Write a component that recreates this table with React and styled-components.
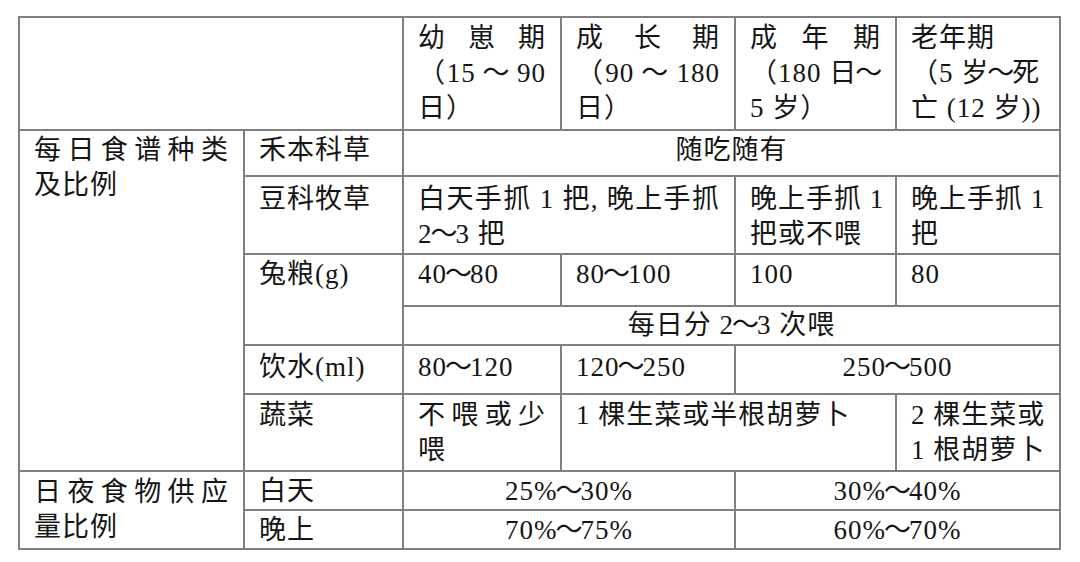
import React from "react";
import styled, { createGlobalStyle } from "styled-components";

const GlobalStyle = createGlobalStyle`
  html, body {
    margin: 0;
    padding: 0;
    background: #ffffff;
  }
  body {
    font-family: "Liberation Serif", "Noto Sans CJK SC", serif;
    color: #151515;
  }
`;

const Page = styled.div`
  padding: 16px 0 0 18px;
`;

const Table = styled.table`
  border-collapse: collapse;
  table-layout: fixed;
  width: 1041px;
  font-size: 27px;
  line-height: 35px;
  letter-spacing: 1px;
`;

const Col = styled.col`
  width: ${(p) => p.$w}px;
`;

const Row = styled.tr`
  height: ${(p) => p.$h}px;
`;

const Cell = styled.td`
  border: 2px solid #7f7f7f;
  padding: ${(p) => (p.$pt !== undefined ? p.$pt : 2)}px 14px 0;
  vertical-align: top;
  text-align: ${(p) => (p.$center ? "center" : "left")};
  overflow: hidden;
`;

const Line = styled.span`
  display: block;
  white-space: nowrap;
  text-align-last: ${(p) => (p.$justify ? "justify" : "auto")};
`;

// the wave dash in the print is narrower than a full em
const Tilde = styled.span`
  letter-spacing: 0;
  margin: 0 -2px;
`;

// wraps every ～ in a narrower Tilde
const T = ({ children }) => {
  const parts = String(children).split("～");
  return parts.map((part, i) => (
    <React.Fragment key={i}>
      {i > 0 && <Tilde>～</Tilde>}
      {part}
    </React.Fragment>
  ));
};

const widths = [225, 159, 158, 174, 161, 164];

export default function App() {
  return (
    <Page>
      <GlobalStyle />
      <Table>
        <colgroup>
          {widths.map((w, i) => (
            <Col key={i} $w={w} />
          ))}
        </colgroup>
        <tbody>
          <Row $h={113}>
            <Cell colSpan={2} />
            <Cell $pt={3}>
              <Line $justify>幼崽期</Line>
              <Line $justify>
                <T>（15 ～ 90</T>
              </Line>
              <Line>日）</Line>
            </Cell>
            <Cell $pt={3}>
              <Line $justify>成长期</Line>
              <Line $justify>
                <T>（90 ～ 180</T>
              </Line>
              <Line>日）</Line>
            </Cell>
            <Cell $pt={3}>
              <Line $justify>成年期</Line>
              <Line>
                <T>（180 日～</T>
              </Line>
              <Line>5 岁）</Line>
            </Cell>
            <Cell $pt={3}>
              <Line>老年期</Line>
              <Line>
                <T>（5 岁～死</T>
              </Line>
              <Line>亡 (12 岁))</Line>
            </Cell>
          </Row>

          <Row $h={46}>
            <Cell rowSpan={6}>
              <Line $justify>每日食谱种类</Line>
              <Line>及比例</Line>
            </Cell>
            <Cell>禾本科草</Cell>
            <Cell colSpan={4} $center>
              随吃随有
            </Cell>
          </Row>

          <Row $h={78}>
            <Cell $pt={5}>豆科牧草</Cell>
            <Cell colSpan={2} $pt={5}>
              <Line $justify>白天手抓 1 把, 晚上手抓</Line>
              <Line>
                <T>2～3 把</T>
              </Line>
            </Cell>
            <Cell $pt={5}>
              <Line>晚上手抓 1</Line>
              <Line>把或不喂</Line>
            </Cell>
            <Cell $pt={5}>
              <Line>晚上手抓 1</Line>
              <Line>把</Line>
            </Cell>
          </Row>

          <Row $h={52}>
            <Cell rowSpan={2}>兔粮(g)</Cell>
            <Cell>
              <T>40～80</T>
            </Cell>
            <Cell>
              <T>80～100</T>
            </Cell>
            <Cell>100</Cell>
            <Cell>80</Cell>
          </Row>

          <Row $h={39}>
            <Cell colSpan={4} $center $pt={1}>
              <T>每日分 2～3 次喂</T>
            </Cell>
          </Row>

          <Row $h={49}>
            <Cell $pt={4}>饮水(ml)</Cell>
            <Cell $pt={4}>
              <T>80～120</T>
            </Cell>
            <Cell $pt={4}>
              <T>120～250</T>
            </Cell>
            <Cell colSpan={2} $center $pt={4}>
              <T>250～500</T>
            </Cell>
          </Row>

          <Row $h={77}>
            <Cell $pt={3}>蔬菜</Cell>
            <Cell $pt={3}>
              <Line $justify>不喂或少</Line>
              <Line>喂</Line>
            </Cell>
            <Cell colSpan={2} $pt={3}>
              1 棵生菜或半根胡萝卜
            </Cell>
            <Cell $pt={3}>
              <Line>2 棵生菜或</Line>
              <Line>1 根胡萝卜</Line>
            </Cell>
          </Row>

          <Row $h={39}>
            <Cell rowSpan={2} $pt={3}>
              <Line $justify>日夜食物供应</Line>
              <Line>量比例</Line>
            </Cell>
            <Cell $pt={2}>白天</Cell>
            <Cell colSpan={2} $center $pt={2}>
              <T>25%～30%</T>
            </Cell>
            <Cell colSpan={2} $center $pt={2}>
              <T>30%～40%</T>
            </Cell>
          </Row>

          <Row $h={39}>
            <Cell $pt={2}>晚上</Cell>
            <Cell colSpan={2} $center $pt={2}>
              <T>70%～75%</T>
            </Cell>
            <Cell colSpan={2} $center $pt={2}>
              <T>60%～70%</T>
            </Cell>
          </Row>
        </tbody>
      </Table>
    </Page>
  );
}
